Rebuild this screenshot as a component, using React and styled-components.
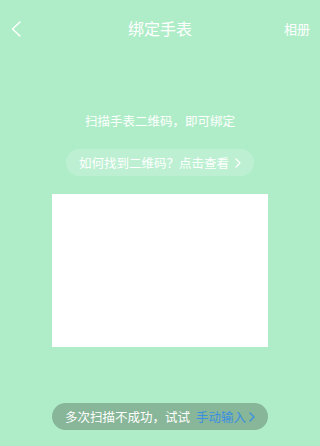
import styled, { createGlobalStyle } from 'styled-components'

const GlobalStyle = createGlobalStyle`
  html, body {
    margin: 0;
    padding: 0;
    background: #afedc8;
  }
  body {
    font-family: "Noto Sans CJK SC", "Noto Sans", sans-serif;
  }
`

const Page = styled.div`
  width: 320px;
  height: 446px;
  background: #afedc8;
  display: flex;
  flex-direction: column;
  align-items: center;
  overflow: hidden;
`

const NavBar = styled.div`
  width: 100%;
  height: 56px;
  display: grid;
  grid-template-columns: 60px 1fr 60px;
  align-items: center;
  color: #fff;
`

const BackBtn = styled.div`
  padding-left: 11px;
  padding-top: 1px;
  display: flex;
  align-items: center;
`

const Title = styled.div`
  text-align: center;
  font-size: 16px;
`

const RightLink = styled.div`
  text-align: right;
  padding-right: 10px;
  font-size: 13px;
`

const Hint = styled.div`
  margin-top: 56px;
  color: #fff;
  font-size: 12.5px;
  line-height: 18px;
`

const HelpPill = styled.div`
  margin-top: 19px;
  height: 27px;
  padding: 0 13px;
  border-radius: 14px;
  background: rgba(255, 255, 255, 0.18);
  display: flex;
  align-items: center;
  gap: 6px;
  color: #fff;
  font-size: 12.5px;
`

const ScanBox = styled.div`
  margin-top: 18px;
  width: 216px;
  height: 153px;
  background: #fff;
`

const BottomPill = styled.div`
  margin-top: 56px;
  width: 216px;
  height: 27px;
  border-radius: 14px;
  background: #88b698;
  display: flex;
  align-items: center;
  justify-content: center;
  color: #fff;
  font-size: 12.5px;
`

const Link = styled.span`
  color: #3b8fe0;
  margin-left: 6px;
  display: inline-flex;
  align-items: center;
  gap: 3px;
`

function Chevron({ size = 10, color = '#fff', width = 1.3 }) {
  return (
    <svg width={size * 0.6} height={size} viewBox="0 0 6 10">
      <path d="M1 1 L5 5 L1 9" fill="none" stroke={color} strokeWidth={width} strokeLinecap="round" strokeLinejoin="round" />
    </svg>
  )
}

export default function App() {
  return (
    <>
      <GlobalStyle />
      <Page>
        <NavBar>
          <BackBtn>
            <svg width="10" height="16" viewBox="0 0 10 16">
              <path d="M9 1 L1.5 8 L9 15" fill="none" stroke="#fff" strokeWidth="1.4" strokeLinecap="round" strokeLinejoin="round" />
            </svg>
          </BackBtn>
          <Title>绑定手表</Title>
          <RightLink>相册</RightLink>
        </NavBar>
        <Hint>扫描手表二维码，即可绑定</Hint>
        <HelpPill>
          如何找到二维码？点击查看
          <Chevron />
        </HelpPill>
        <ScanBox />
        <BottomPill>
          多次扫描不成功，试试
          <Link>
            手动输入
            <Chevron color="#3b8fe0" />
          </Link>
        </BottomPill>
      </Page>
    </>
  )
}
